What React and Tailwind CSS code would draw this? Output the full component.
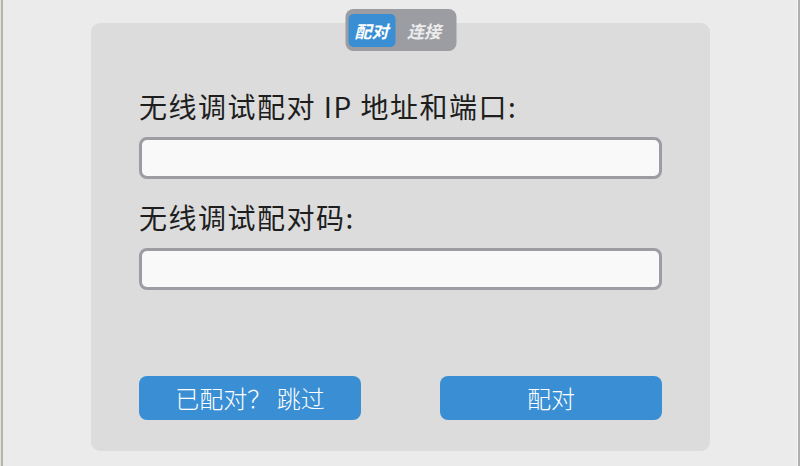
export default function App() {
  const font = { fontFamily: '"Noto Sans CJK SC", "Noto Sans", sans-serif' };
  return (
    <div className="w-[800px] h-[466px] bg-[#ebebeb] flex overflow-hidden" style={font}>
      <div className="w-px bg-[#e2e2e2]" />
      <div className="w-[2px] bg-[#b9b5a6]" />
      <div className="flex-1 flex pl-[88px] pt-[23px]">
        <div className="relative w-[619px] h-[428px] bg-[#dcdcdc] rounded-[9px] px-[48px] pt-[66px] flex flex-col">
          <div className="absolute top-[-14px] left-1/2 -translate-x-1/2 w-[111px] h-[42px] rounded-[8px] bg-[#9b9da2] flex items-center px-[3px] gap-[5px]">
            <div className="h-[33px] w-[47px] rounded-[5px] bg-[#3a8fd4] flex items-center justify-center text-white text-[17px] font-bold italic leading-none">配对</div>
            <div className="h-[33px] w-[48px] flex items-center justify-center text-[#ececec] text-[17px] font-bold italic leading-none">连接</div>
          </div>
          <div className="text-[28px] leading-[34px] text-[#1e1e1e] tracking-[1.5px]">无线调试配对 IP 地址和端口:</div>
          <div className="mt-[14px] h-[42px] rounded-[8px] border-[3px] border-[#9b9da2] bg-[#f9f9f9]" />
          <div className="mt-[21px] text-[28px] leading-[34px] text-[#1e1e1e] tracking-[1.5px]">无线调试配对码:</div>
          <div className="mt-[14px] h-[42px] rounded-[8px] border-[3px] border-[#9b9da2] bg-[#f9f9f9]" />
          <div className="mt-[86px] flex justify-between">
            <div className="w-[222px] h-[44px] rounded-[8px] bg-[#3a8fd4] flex items-center justify-center text-white text-[24px] font-light">已配对？ 跳过</div>
            <div className="w-[222px] h-[44px] rounded-[8px] bg-[#3a8fd4] flex items-center justify-center text-white text-[24px] font-light">配对</div>
          </div>
        </div>
      </div>
      <div className="w-px bg-[#f4f4f4]" />
      <div className="w-[2px] bg-[#b0b0b0]" />
    </div>
  );
}
